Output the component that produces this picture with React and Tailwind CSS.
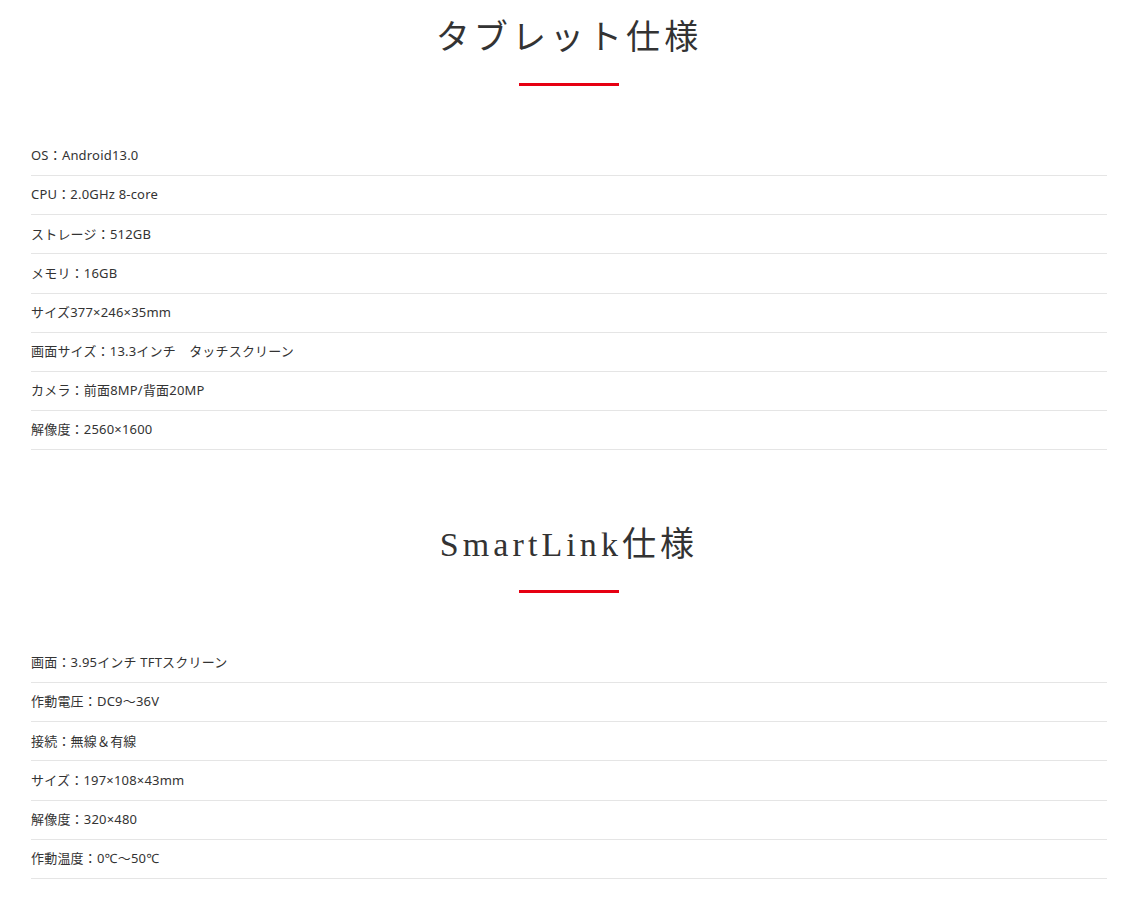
import React from "react";

const tablet = [
  "OS：Android13.0",
  "CPU：2.0GHz 8-core",
  "ストレージ：512GB",
  "メモリ：16GB",
  "サイズ377×246×35mm",
  "画面サイズ：13.3インチ　タッチスクリーン",
  "カメラ：前面8MP/背面20MP",
  "解像度：2560×1600",
];

const smartlink = [
  "画面：3.95インチ TFTスクリーン",
  "作動電圧：DC9～36V",
  "接続：無線＆有線",
  "サイズ：197×108×43mm",
  "解像度：320×480",
  "作動温度：0℃～50℃",
];

function Section({ title, items, topClass }) {
  return (
    <section className={topClass}>
      <h2
        className="text-center text-[34px] leading-[38px] h-[38px] tracking-[0.12em] text-[#333] font-normal"
        style={{ fontFamily: '"Liberation Serif", "Noto Sans CJK JP", serif' }}
      >
        {title}
      </h2>
      <div className="mt-[26px] flex justify-center">
        <div className="w-[100px] h-[3px] bg-[#e60012]" />
      </div>
      <ul className="mt-[51px]">
        {items.map((t) => (
          <li
            key={t}
            className="h-[39.14px] flex items-center border-b border-[#e5e5e5] text-[13px] tracking-[0.015em] text-[#333]"
            style={{ fontFamily: '"Noto Sans", "Noto Sans CJK JP", sans-serif' }}
          >
            {t}
          </li>
        ))}
      </ul>
    </section>
  );
}

export default function App() {
  return (
    <div className="bg-white w-[1142px] min-h-[903px]">
      <div className="ml-[31px] w-[1076px]">
        <Section title="タブレット仕様" items={tablet} topClass="pt-[19px]" />
        <Section title="SmartLink仕様" items={smartlink} topClass="pt-[76px]" />
      </div>
    </div>
  );
}
